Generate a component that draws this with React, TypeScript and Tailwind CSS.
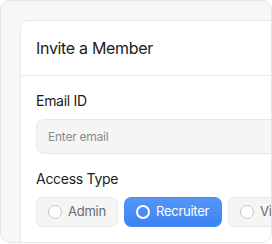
import React from "react";

export default function App() {
  return (
    <div className="w-[272px] h-[244px] bg-white" style={{ fontFamily: "Inter, 'Noto Sans', sans-serif" }}>
      <div className="w-[272px] h-[243px] bg-[#f7f7f7] border border-[#e6e6e6] rounded-[10px] overflow-hidden pl-[19px] pt-[19px]">
        <div className="w-[300px] h-[260px] bg-white border border-[#e8e8e8] rounded-[8px]">
          <div className="pl-[15px] pt-[15px] pb-[15px] border-b border-[#ebebeb]">
            <div className="text-[16px] leading-[24px] text-[#1c1c1c] tracking-[-0.02em]">Invite a Member</div>
          </div>
          <div className="pl-[15px] pt-[15px]">
            <div className="text-[14px] leading-[20px] text-[#1c1c1c] tracking-[-0.02em]">Email ID</div>
            <div className="mt-[8px] h-[35px] w-[260px] bg-[#f5f5f5] border border-[#e8e8e8] rounded-[8px] flex items-center pl-[11px] text-[12px] text-[#8a8a8a] tracking-[-0.02em]">
              Enter email
            </div>
            <div className="mt-[15px] text-[14px] leading-[20px] text-[#1c1c1c] tracking-[-0.02em]">Access Type</div>
            <div className="mt-[8px] flex gap-[6px]">
              <div className="h-[30px] w-[82px] flex items-center gap-[6px] pl-[11px] bg-[#f5f5f5] border border-[#e8e8e8] rounded-[7px]">
                <span className="w-[14px] h-[14px] rounded-full border-[1.5px] border-[#c9c9c9] bg-white" />
                <span className="text-[13px] text-[#6b6b6b] tracking-[-0.02em]">Admin</span>
              </div>
              <div className="h-[30px] w-[98px] flex items-center gap-[6px] pl-[11px] bg-gradient-to-b from-[#5596f7] to-[#3d82f3] border border-[#4a8cf5] rounded-[7px]">
                <span className="w-[14px] h-[14px] rounded-full border-2 border-white" />
                <span className="text-[13px] text-white tracking-[-0.02em]">Recruiter</span>
              </div>
              <div className="h-[30px] w-[82px] flex items-center gap-[6px] pl-[11px] bg-[#f5f5f5] border border-[#e8e8e8] rounded-[7px]">
                <span className="w-[14px] h-[14px] rounded-full border-[1.5px] border-[#c9c9c9] bg-white" />
                <span className="text-[13px] text-[#6b6b6b] tracking-[-0.02em]">Viewer</span>
              </div>
            </div>
          </div>
        </div>
      </div>
    </div>
  );
}
